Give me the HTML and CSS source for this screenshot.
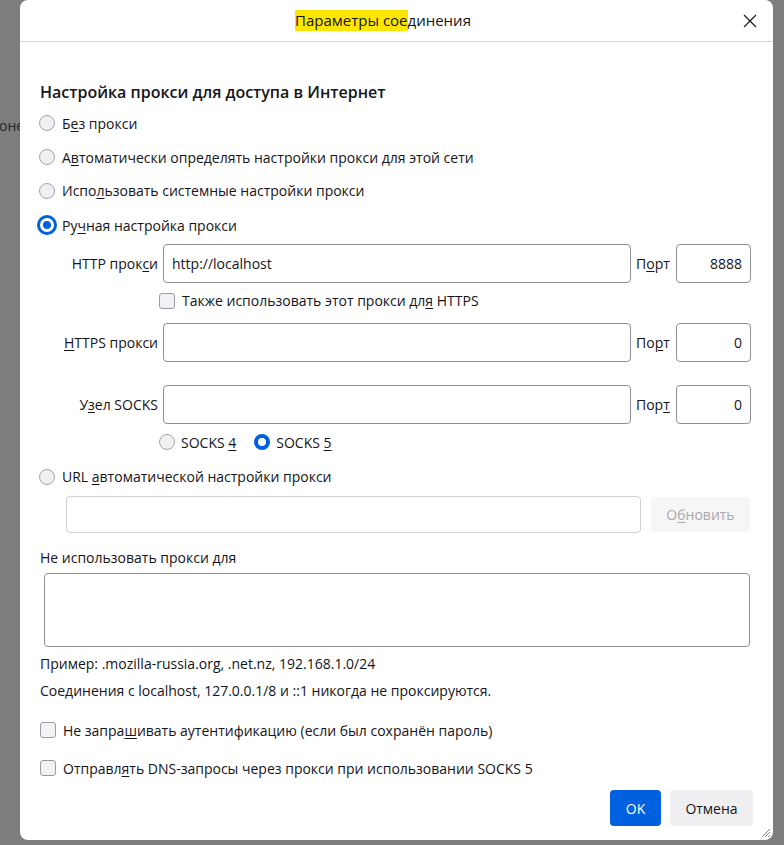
FILE: index.html
```html
<!DOCTYPE html>
<html lang="ru">
<head>
<meta charset="utf-8">
<title>Параметры соединения</title>
<link rel="stylesheet" href="styles.css">
</head>
<body>
<div class="page">
  <div class="backdrop-strip"><span class="bg-text">оне</span></div>
  <div class="dialog">
    <header class="dlg-header">
      <div class="dlg-title"><span class="hl">Параметры сое</span>динения</div>
      <button class="close" aria-label="Закрыть">
        <svg width="14" height="14" viewBox="0 0 14 14"><path d="M1 1 L13 13 M13 1 L1 13" stroke="#1b1b1b" stroke-width="1.2" fill="none"/></svg>
      </button>
    </header>
    <div class="dlg-body">
      <h2 class="heading">Настройка прокси для доступа в Интернет</h2>
      <div class="radio-row h34"><span class="slot"><span class="radio"></span></span><span>Б<u>е</u>з прокси</span></div>
      <div class="radio-row h34"><span class="slot"><span class="radio"></span></span><span>А<u>в</u>томатически определять настройки прокси для этой сети</span></div>
      <div class="radio-row h33"><span class="slot"><span class="radio"></span></span><span>Испо<u>л</u>ьзовать системные настройки прокси</span></div>
      <div class="radio-row h36"><span class="slot"><span class="radio focused"></span></span><span>Ру<u>ч</u>ная настройка прокси</span></div>

      <div class="proxy-row first">
        <span class="plabel">HTTP прок<u>с</u>и</span>
        <input class="field" type="text" value="http://localhost">
        <span class="port-label">П<u>о</u>рт</span>
        <input class="field port" type="text" value="8888">
      </div>
      <div class="proxy-row cb-line">
        <div class="check-row inner"><span class="checkbox"></span><span>Также использовать этот прокси дл<u>я</u> HTTPS</span></div>
      </div>
      <div class="proxy-row https">
        <span class="plabel"><u>H</u>TTPS прокси</span>
        <input class="field" type="text" value="">
        <span class="port-label">По<u>р</u>т</span>
        <input class="field port" type="text" value="0">
      </div>
      <div class="proxy-row socks">
        <span class="plabel">У<u>з</u>ел SOCKS</span>
        <input class="field" type="text" value="">
        <span class="port-label">Пор<u>т</u></span>
        <input class="field port" type="text" value="0">
      </div>
      <div class="socks-versions">
        <div class="mini-radio first"><span class="slot"><span class="radio"></span></span><span>SOCKS <u>4</u></span></div>
        <div class="mini-radio"><span class="slot"><span class="radio checked"></span></span><span>SOCKS <u>5</u></span></div>
      </div>

      <div class="radio-row h33"><span class="slot"><span class="radio"></span></span><span>URL <u>а</u>втоматической настройки прокси</span></div>
      <div class="auto-row">
        <input class="field disabled" type="text" value="" disabled>
        <button class="btn reload" disabled>О<u>б</u>новить</button>
      </div>

      <div class="text-line exclude">Не использовать прокси <u>д</u>ля</div>
      <textarea class="noproxy"></textarea>
      <div class="text-line example">Пример: .mozilla-russia.org, .net.nz, 192.168.1.0/24</div>
      <div class="text-line note">Соединения с localhost, 127.0.0.1/8 и ::1 никогда не проксируются.</div>

      <div class="check-row cb1"><span class="checkbox"></span><span>Не запра<u>ш</u>ивать аутентификацию (если был сохранён пароль)</span></div>
      <div class="check-row cb2"><span class="checkbox"></span><span>Отправл<u>я</u>ть DNS-запросы через прокси при использовании SOCKS 5</span></div>

      <div class="footer">
        <button class="btn primary">OK</button>
        <button class="btn secondary">Отмена</button>
      </div>
    </div>
    <svg class="grip" width="12" height="12" viewBox="0 0 12 12"><path d="M11 3 L3 11 M11 6 L6 11 M11 9 L9 11" stroke="#8a8a8a" stroke-width="1" fill="none"/></svg>
  </div>
</div>
</body>
</html>
```

FILE: styles.css
```css
html, body {
  margin: 0;
  padding: 0;
}
body {
  background: #7d7d7d;
  width: 784px;
  height: 845px;
  overflow: hidden;
  font-family: "Open Sans", "Noto Sans", sans-serif;
  font-size: 14px;
  color: #15141a;
}
u {
  text-decoration: underline;
  text-underline-offset: 2px;
}
.page {
  display: flex;
  height: 845px;
}
.backdrop-strip {
  width: 20px;
  flex: none;
  overflow: hidden;
  padding-top: 116px;
  white-space: nowrap;
}
.bg-text {
  display: block;
  margin-left: -1px;
  line-height: 20px;
  color: #262626;
}
.dialog {
  position: relative;
  width: 753px;
  height: 840px;
  flex: none;
  background: #ffffff;
  border-radius: 8px;
  display: flex;
  flex-direction: column;
}
.dlg-header {
  height: 41px;
  flex: none;
  display: flex;
  align-items: center;
  border-bottom: 1px solid #d4d4d4;
  padding-left: 9px;
  padding-right: 10px;
}
.dlg-title {
  flex: 1;
  text-align: center;
  font-size: 15px;
  line-height: 21px;
}
.hl {
  background: #ffe600;
  display: inline-block;
}
.close {
  width: 26px;
  height: 26px;
  border: 0;
  background: transparent;
  padding: 0;
  display: flex;
  align-items: center;
  justify-content: center;
}
.dlg-body {
  padding: 0 22px 0 20px;
  display: flex;
  flex-direction: column;
}
.heading {
  margin: 38px 0 0 0;
  height: 24px;
  line-height: 24px;
  font-size: 16px;
  font-weight: 600;
}
.radio-row {
  display: flex;
  align-items: center;
}
.h34 { height: 34px; }
.h33 { height: 33px; }
.h36 { height: 36px; }
.heading + .radio-row { margin-top: 2px; }
.slot {
  width: 22px;
  height: 22px;
  display: flex;
  align-items: center;
  justify-content: center;
  margin-left: -4px;
  margin-right: 4px;
  flex: none;
}
.radio {
  width: 16px;
  height: 16px;
  box-sizing: border-box;
  border-radius: 50%;
  border: 1px solid #a3a3a8;
  background: #f0f0f2;
}
.radio.checked {
  border: 4px solid #0061e0;
  background: #ffffff;
}
.radio.focused {
  width: 20px;
  height: 20px;
  border: 3px solid #0061e0;
  background: #ffffff;
  display: flex;
  align-items: center;
  justify-content: center;
}
.radio.focused::after {
  content: "";
  width: 8px;
  height: 8px;
  border-radius: 50%;
  background: #0061e0;
}
.proxy-row {
  display: grid;
  grid-template-columns: 118px 468px 35px 75px;
  column-gap: 5px;
  align-items: center;
  height: 39px;
}
.proxy-row.first { margin-top: 1px; }
.proxy-row.cb-line { height: 35px; }
.proxy-row.https { margin-top: 5px; }
.proxy-row.socks { margin-top: 23px; }
.plabel {
  text-align: right;
  white-space: nowrap;
}
.port-label {
  white-space: nowrap;
}
.field {
  box-sizing: border-box;
  height: 39px;
  width: 100%;
  margin: 0;
  border: 1px solid #8f8f9d;
  border-radius: 4px;
  background: #ffffff;
  font-family: inherit;
  font-size: 14px;
  color: #15141a;
  padding: 0 8px;
}
.field.port {
  text-align: right;
}
.check-row {
  display: flex;
  align-items: center;
}
.check-row.inner {
  grid-column: 2 / 5;
  margin-left: -4px;
}
.checkbox {
  width: 16px;
  height: 16px;
  box-sizing: border-box;
  border: 1px solid #9b9ba2;
  border-radius: 3px;
  background: #f2f2f4;
  margin-right: 7px;
  flex: none;
}
.socks-versions {
  display: flex;
  align-items: center;
  height: 36px;
  padding-left: 123px;
}
.mini-radio {
  display: flex;
  align-items: center;
}
.mini-radio .slot {
  margin-left: -7px;
  margin-right: 3px;
}
.mini-radio.first {
  margin-right: 22px;
}
.auto-row {
  display: flex;
  align-items: center;
  margin-top: 3px;
  height: 37px;
  padding-left: 26px;
}
.field.disabled {
  width: 575px;
  height: 37px;
  border-color: #cfcfd6;
  flex: none;
}
.btn {
  font-family: inherit;
  font-size: 14px;
  border: 0;
  border-radius: 4px;
  padding: 0;
  height: 36px;
}
.reload {
  margin-left: 10px;
  width: 99px;
  height: 35px;
  background: #f6f6f7;
  color: #a8a8ad;
}
.text-line {
  height: 24px;
  line-height: 24px;
  white-space: nowrap;
}
.exclude { margin-top: 13px; }
.noproxy {
  box-sizing: border-box;
  margin: 3px 0 0 4px;
  width: 706px;
  height: 74px;
  border: 1px solid #8f8f9d;
  border-radius: 4px;
  resize: none;
  font-family: inherit;
}
.example { margin-top: 5px; }
.note { margin-top: 3px; }
.cb1 { margin-top: 9px; height: 36px; }
.cb2 { margin-top: 2px; height: 36px; }
.footer {
  display: flex;
  justify-content: flex-end;
  gap: 9px;
  margin-top: 4px;
  margin-right: -2px;
}
.primary {
  width: 51px;
  background: #0061e0;
  color: #ffffff;
}
.secondary {
  width: 83px;
  background: #efeff1;
  color: #15141a;
}
.grip {
  position: absolute;
  right: 2px;
  bottom: 2px;
}
```
